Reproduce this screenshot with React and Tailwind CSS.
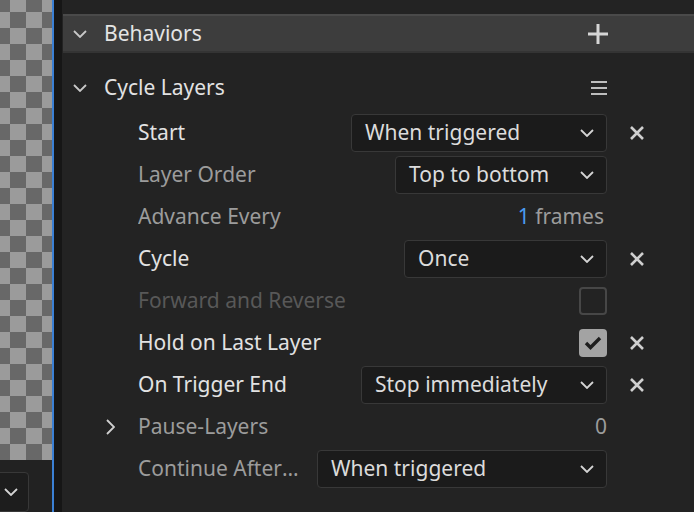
import React from "react";

const Chevron = ({ className = "" }) => (
  <svg width="14" height="8" viewBox="0 0 14 8" className={className}>
    <path d="M1 1l6 6 6-6" fill="none" stroke="currentColor" strokeWidth="1.8" />
  </svg>
);

const ChevronRight = () => (
  <svg width="9" height="16" viewBox="0 0 9 16" className="text-[#d0d0d0]">
    <path d="M1 1l7 7-7 7" fill="none" stroke="currentColor" strokeWidth="1.8" />
  </svg>
);

const XIcon = () => (
  <svg width="16" height="16" viewBox="0 0 16 16" className="text-[#cfcfcf]">
    <path d="M2 2l12 12M14 2L2 14" fill="none" stroke="currentColor" strokeWidth="2.6" />
  </svg>
);

const Dropdown = ({ value, width }) => (
  <div
    className={`flex items-center justify-between h-[38px] pl-[13px] pr-[12px] rounded-[4px] border border-[#383838] bg-[#1b1b1b] text-[#dcdcdc] ${width}`}
  >
    <span>{value}</span>
    <Chevron className="text-[#d4d4d4]" />
  </div>
);

const Checkbox = ({ checked }) =>
  checked ? (
    <div className="w-[28px] h-[28px] rounded-[4px] bg-[#a3a3a3] flex items-center justify-center">
      <svg width="18" height="14" viewBox="0 0 18 14">
        <path d="M2 7l4.5 4.5L16 2" fill="none" stroke="#1e1e1e" strokeWidth="3.4" />
      </svg>
    </div>
  ) : (
    <div className="w-[28px] h-[28px] rounded-[4px] border-2 border-[#474747]" />
  );

const Row = ({ label, tone = "bright", control, clear, lead }) => {
  const color =
    tone === "bright" ? "text-[#e2e2e2]" : tone === "dim" ? "text-[#585858]" : "text-[#9c9c9c]";
  return (
    <div className={`flex items-center h-[42px] pr-[27px] ${lead ? "pl-[44px]" : "pl-[76px]"}`}>
      {lead && <div className="w-[32px] shrink-0 flex items-center">{lead}</div>}
      <div className={`flex-1 min-w-0 truncate pr-[14px] ${color}`}>{label}</div>
      <div className="shrink-0 flex justify-end">{control}</div>
      <div className="w-[60px] shrink-0 flex justify-center">{clear && <XIcon />}</div>
    </div>
  );
};

export default function App() {
  return (
    <div className="flex w-[694px] h-[512px] overflow-hidden bg-[#232323] font-['Noto_Sans',sans-serif] text-[21px]">
      {/* canvas strip */}
      <div className="w-[52px] shrink-0 flex flex-col overflow-hidden">
        <div className="h-[472px] bg-[conic-gradient(#9b9b9b_25%,#686868_0_50%,#9b9b9b_0_75%,#686868_0)] bg-[length:32px_32px] bg-[position:-6px_-4px]" />
        <div className="flex-1 bg-[#222] pt-[12px]">
          <div className="w-[40px] h-[40px] -ml-[11px] rounded-[4px] border border-[#383838] bg-[#1d1d1d] flex items-start justify-end pt-[15px] pr-[10px]">
            <Chevron className="text-[#d4d4d4]" />
          </div>
        </div>
      </div>
      <div className="w-[2px] shrink-0 bg-[#3b80d4]" />
      <div className="w-[8px] shrink-0 bg-[#161616]" />

      {/* inspector */}
      <div className="flex-1 min-w-0 pt-[14px] pl-[1px]">
        <div className="flex items-center h-[39px] pl-[10px] pr-[86px] bg-[#3d3d3d] border-t-2 border-t-[#4a4a4a] border-b-2 border-b-[#343434]">
          <Chevron className="text-[#c8c8c8]" />
          <span className="ml-[17px] flex-1 text-[#e4e4e4]">Behaviors</span>
          <svg width="20" height="20" viewBox="0 0 20 20" className="text-[#d6d6d6]">
            <path d="M10 0v20M0 10h20" stroke="currentColor" strokeWidth="3" />
          </svg>
        </div>

        <div className="flex items-center h-[44px] mt-[13px] pl-[10px] pr-[87px]">
          <Chevron className="text-[#c8c8c8]" />
          <span className="ml-[17px] flex-1 text-[#e2e2e2]">Cycle Layers</span>
          <svg width="16" height="14" viewBox="0 0 16 14" className="text-[#bdbdbd]">
            <path d="M0 1h16M0 7h16M0 13h16" stroke="currentColor" strokeWidth="2" />
          </svg>
        </div>

        <div className="-ml-[1px] mt-[2px]">
          <Row label="Start" control={<Dropdown value="When triggered" width="w-[256px]" />} clear />
          <Row label="Layer Order" tone="mid" control={<Dropdown value="Top to bottom" width="w-[212px]" />} />
          <Row
            label="Advance Every"
            tone="mid"
            control={
              <span className="pr-[3px] text-[#9c9c9c]">
                <span className="text-[#4a9bf0]">1</span> frames
              </span>
            }
          />
          <Row label="Cycle" control={<Dropdown value="Once" width="w-[203px]" />} clear />
          <Row label="Forward and Reverse" tone="dim" control={<Checkbox />} />
          <Row label="Hold on Last Layer" control={<Checkbox checked />} clear />
          <Row label="On Trigger End" control={<Dropdown value="Stop immediately" width="w-[246px]" />} clear />
          <Row
            label="Pause-Layers"
            tone="mid"
            lead={<ChevronRight />}
            control={<span className="text-[#9c9c9c]">0</span>}
          />
          <Row label="Continue After Reaching End" tone="mid" control={<Dropdown value="When triggered" width="w-[290px]" />} />
        </div>
      </div>
    </div>
  );
}
